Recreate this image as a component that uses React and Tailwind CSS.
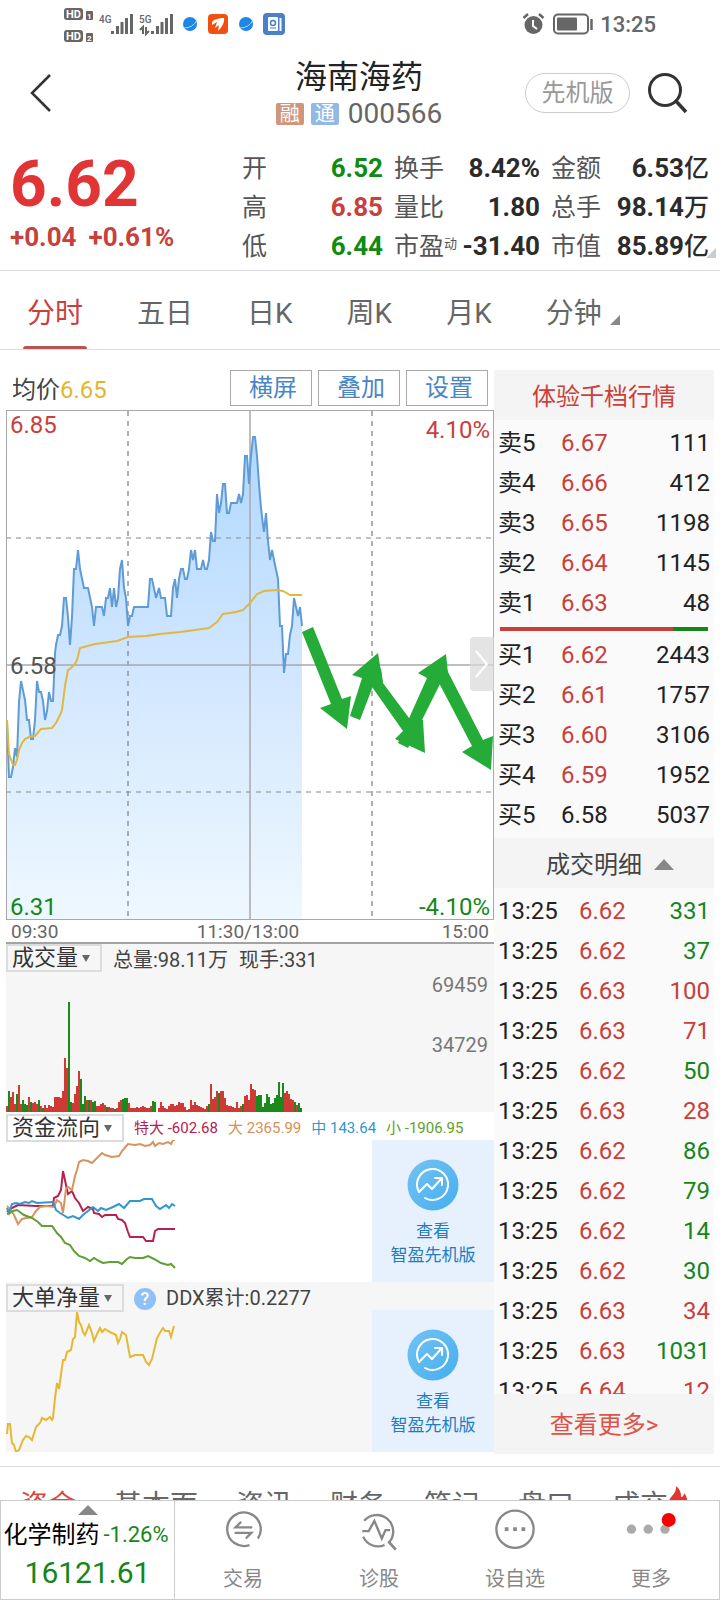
const RED = "text-[#c8403c]";
const GREEN = "text-[#16861a]";

const quotes = [
  [
    { label: "开", value: "6.52", color: "text-[#0f8a12]" },
    { label: "高", value: "6.85", color: RED },
    { label: "低", value: "6.44", color: "text-[#0f8a12]" },
  ],
  [
    { label: "换手", value: "8.42%" },
    { label: "量比", value: "1.80" },
    { label: "市盈", sup: "动", value: "-31.40" },
  ],
  [
    { label: "金额", value: "6.53", unit: "亿" },
    { label: "总手", value: "98.14", unit: "万" },
    { label: "市值", value: "85.89", unit: "亿" },
  ],
];

const periods = ["分时", "五日", "日K", "周K", "月K", "分钟"];

const sells = [
  ["卖5", "6.67", "111"],
  ["卖4", "6.66", "412"],
  ["卖3", "6.65", "1198"],
  ["卖2", "6.64", "1145"],
  ["卖1", "6.63", "48"],
];

const buys = [
  ["买1", "6.62", "2443"],
  ["买2", "6.61", "1757"],
  ["买3", "6.60", "3106"],
  ["买4", "6.59", "1952"],
  ["买5", "6.58", "5037"],
];

const trades = [
  ["6.62", "331", "sell"],
  ["6.62", "37", "sell"],
  ["6.63", "100", "buy"],
  ["6.63", "71", "buy"],
  ["6.62", "50", "sell"],
  ["6.63", "28", "buy"],
  ["6.62", "86", "sell"],
  ["6.62", "79", "sell"],
  ["6.62", "14", "sell"],
  ["6.62", "30", "sell"],
  ["6.63", "34", "buy"],
  ["6.63", "1031", "sell"],
  ["6.64", "12", "buy"],
];

const sections = ["资金", "基本面", "资讯", "财务", "笔记", "盘口", "成交"];

const priceLine =
  "7,722 9,777 11,777 13,767 15,748 17,757 19,702 21,681 25,700 27,720 29,720 31,739 33,739 35,720 37,681 39,692 41,692 43,701 45,720 47,711 49,692 51,701 53,701 55,653 56,645 58,635 60,635 62,626 64,598 66,598 68,617 70,645 72,617 74,569 76,569 78,550 80,569 84,588 88,588 92,607 94,626 96,607 102,607 104,616 106,598 108,598 110,588 112,607 114,588 116,607 118,598 120,569 122,560 124,588 126,598 128,626 130,616 132,616 134,607 148,607 150,579 152,579 156,598 159,588 161,598 165,598 167,616 171,616 173,588 175,579 177,598 179,579 181,569 183,569 185,579 187,579 189,569 191,550 193,560 195,550 197,569 201,569 203,560 205,569 207,569 209,560 211,532 213,541 215,541 217,494 219,513 221,503 223,484 225,484 227,513 229,513 231,503 237,503 239,494 241,503 243,494 245,456 247,456 249,484 251,456 253,437 255,437 257,456 259,484 261,508 263,525 264,532 266,513 268,541 270,560 272,550 274,560 278,579 280,626 282,626 284,673 286,654 288,654 290,635 292,626 294,598 296,607 298,616 300,607 302,626";

const avgLine =
  "7,720 9,754 13,765 15,765 17,760 19,750 22,743 25,739 29,737 35,736 41,729 52,728 56,723 60,715 62,710 65,686 68,670 70,669 75,664 77,660 80,648 95,644 117,641 128,637 146,636 160,634 180,632 195,630 209,628 217,622 223,614 236,612 243,610 250,603 257,594 264,591 276,590 283,591 290,595 302,595";

// positive = up minute, negative = down minute
const volumes = [
  6, -21, 15, 20, 8, -18, 27, 8, -12, -8, -7, 15, -10, 9, 10, 8, -12, 6, -4, 7,
  4, 7, 6, 5, 15, 15, 15, 14, 21, 54, 44, -110, -10, 9, 18, 26, 41, -33, -8, -16,
  12, -12, 12, -10, -11, 6, 6, 8, 9, 7, -5, 5, 4, 4, -3, 4, 10, 12, -13, -14,
  -14, 9, 4, 4, 4, 5, 4, 5, 6, 5, 4, 4, 6, -11, -10, 0, 4, 10, 6, 4,
  3, 6, 8, 8, 6, 7, 10, 9, 9, 5, 2, 3, 12, 7, 10, 7, 6, 5, 4, 3,
  6, -8, 28, 13, 15, 21, -19, 21, 21, 14, 7, 6, 6, 5, 4, 10, 4, 6, -8, 16,
  17, 12, 28, 23, 22, -16, -17, -17, -5, -9, -18, -15, -8, -9, -14, -17, -30, -15, -29, 19,
  21, 18, 13, 12, -10, 7, -9, -4,
];

const flowLines = [
  {
    color: "#b8204f",
    points:
      "7,1212 12,1208 16,1206 18,1205 36,1206 53,1206 54,1198 58,1196 61,1190 63,1171 66,1185 68,1194 72,1191 75,1198 79,1203 83,1211 88,1207 93,1209 94,1213 99,1214 102,1217 105,1215 116,1215 118,1219 122,1220 125,1223 128,1232 130,1237 143,1237 146,1241 153,1241 155,1231 158,1229 175,1229",
  },
  {
    color: "#d9935c",
    points:
      "7,1206 11,1210 14,1215 18,1224 22,1219 26,1218 32,1217 36,1211 40,1207 46,1206 54,1207 57,1200 61,1203 63,1213 66,1189 68,1187 72,1190 75,1176 77,1170 79,1162 83,1160 88,1161 92,1163 97,1158 102,1153 105,1155 112,1157 119,1156 122,1151 128,1144 135,1145 140,1144 145,1146 150,1145 153,1142 155,1146 159,1143 163,1144 168,1142 171,1144 173,1140 175,1140",
  },
  {
    color: "#2f97cf",
    points:
      "7,1208 9,1213 12,1204 16,1203 20,1204 25,1202 29,1203 32,1201 37,1203 53,1202 56,1210 60,1213 65,1216 68,1218 73,1216 79,1219 84,1214 88,1211 93,1207 98,1211 101,1208 106,1210 113,1207 119,1204 124,1208 130,1201 140,1201 144,1199 152,1199 156,1206 160,1209 166,1205 169,1208 172,1204 175,1206",
  },
  {
    color: "#5f9f33",
    points:
      "7,1214 10,1213 13,1211 17,1210 24,1215 32,1218 38,1222 42,1226 48,1226 52,1226 57,1233 61,1237 65,1243 70,1245 74,1251 79,1256 85,1258 90,1261 94,1258 99,1261 103,1263 110,1262 118,1262 122,1264 127,1259 130,1257 135,1258 143,1258 148,1256 154,1259 161,1263 168,1265 171,1264 175,1268",
  },
];

const ddxLine =
  "7,1434 8,1424 10,1424 12,1443 14,1445 16,1452 19,1450 23,1440 26,1436 29,1437 32,1440 36,1427 40,1423 42,1418 46,1420 50,1417 52,1420 53,1418 55,1398 57,1383 59,1389 63,1360 65,1360 67,1352 71,1350 73,1339 75,1337 77,1312 79,1322 81,1325 83,1332 85,1335 89,1325 92,1333 94,1341 98,1332 100,1328 102,1332 105,1329 110,1332 116,1335 118,1343 120,1339 122,1332 126,1335 130,1357 135,1355 143,1355 146,1362 149,1365 152,1359 157,1338 161,1331 163,1328 165,1331 169,1331 171,1337 174,1326";

function StatusBar() {
  return (
    <div className="flex h-12 items-center justify-between px-16">
      <svg width="224" height="40" viewBox="64 4 224 40" aria-hidden="true">
        <g fill="#666">
          <rect x="64" y="8" width="19" height="12" rx="3" />
          <rect x="64" y="30" width="19" height="12" rx="3" />
          <rect x="86" y="11" width="7" height="9" rx="1" />
          <rect x="86" y="33" width="7" height="9" rx="1" />
        </g>
        <g fill="#fff" fontFamily="Roboto, sans-serif" fontWeight="700">
          <text x="66" y="18" fontSize="11">HD</text>
          <text x="66" y="40" fontSize="11">HD</text>
          <text x="87" y="19" fontSize="8">1</text>
          <text x="87" y="41" fontSize="8">2</text>
        </g>
        <g fill="#666" fontFamily="Roboto, sans-serif" fontWeight="500" fontSize="10">
          <text x="99" y="23">4G</text>
          <text x="139" y="23">5G</text>
        </g>
        <g stroke="#666" strokeWidth="3">
          <path d="M112.500 31V34M117.500 26V34M122 22V34M126.500 18V34M131.500 14V34" />
          <path d="M152.500 31V34M157.500 26V34M162 22V34M166.500 18V34M171.500 14V34" />
        </g>
        <path d="M140 30L143 27V34M146 27V34L149 31" fill="none" stroke="#666" strokeWidth="2" />
        <circle cx="190" cy="24" r="7" fill="#1f86e6" />
        <path d="M184 28Q193 28 197 20" fill="none" stroke="#a9dcff" strokeWidth="1" />
        <rect x="208" y="14" width="20" height="20" rx="4" fill="#f2500f" />
        <path d="M212 22C214 19 220 18 224 18C225 23 221 28 218 31L219 25L215 28L217 22L212 25Z" fill="#fff" />
        <circle cx="246" cy="24" r="7" fill="#1f86e6" />
        <path d="M240 28Q249 28 253 20" fill="none" stroke="#a9dcff" strokeWidth="1" />
        <rect x="263" y="13" width="22" height="22" rx="4" fill="#4a80c8" />
        <rect x="268" y="17" width="10" height="14" rx="1" fill="#fff" />
        <path d="M280.500 18V31" stroke="#fff" strokeWidth="2" />
        <circle cx="273" cy="23" r="2.500" fill="none" stroke="#4a80c8" strokeWidth="1.500" />
        <path d="M270 28H276" stroke="#4a80c8" />
      </svg>
      <div className="flex items-center gap-1.5">
        <svg width="72" height="24" viewBox="522 12 72 24" aria-hidden="true">
          <circle cx="533.500" cy="25" r="9" fill="#666" />
          <path d="M533 20V26L537 29" fill="none" stroke="#fff" strokeWidth="2" />
          <path d="M523.500 18L528 14M543.500 18L539 14" stroke="#666" strokeWidth="2.500" />
          <rect x="554" y="14.500" width="34" height="19" rx="4" fill="none" stroke="#666" strokeWidth="2" />
          <rect x="557" y="17.500" width="20" height="13" rx="1" fill="#666" />
          <path d="M591.500 19V30" stroke="#666" strokeWidth="2.500" />
        </svg>
        <span className="pt-[2px] text-[22px] font-medium leading-none text-[#666]">13:25</span>
      </div>
    </div>
  );
}

function Header() {
  return (
    <header className="grid h-[90px] grid-cols-[1fr_auto_1fr] items-center pl-[30px] pr-8">
      <button aria-label="返回" className="w-6">
        <svg width="22" height="40" viewBox="0 0 22 40" fill="none" stroke="#333" strokeWidth="2.500">
          <path d="M20 2L2 20L20 38" />
        </svg>
      </button>
      <div className="flex flex-col items-center">
        <h1 className="text-[32px] leading-[42px] text-[#222]">海南海药</h1>
        <div className="flex items-center gap-[7px] text-[28px] leading-8 text-[#666]">
          <span className="flex h-[22px] w-7 items-center justify-center rounded-xs bg-[#cf967c] text-[20px] text-white">
            融
          </span>
          <span className="flex h-[22px] w-7 items-center justify-center rounded-xs bg-[#92b8e4] text-[20px] text-white">
            通
          </span>
          <span className="ml-[2px]">000566</span>
        </div>
      </div>
      <div className="flex items-center justify-end gap-[18px]">
        <button className="h-10 w-[105px] rounded-full border border-[#ccc] text-[24px] leading-none text-[#999]">
          先机版
        </button>
        <button aria-label="搜索">
          <svg width="40" height="42" viewBox="0 0 40 42" fill="none" stroke="#333">
            <circle cx="17" cy="18" r="15.500" strokeWidth="3" />
            <path d="M27 28L38 40" strokeWidth="3.500" />
          </svg>
        </button>
      </div>
    </header>
  );
}

function Quote() {
  return (
    <section className="relative flex h-[133px] border-b border-[#dcdcdc] pl-[10px] pr-[11px]">
      <div className="grow">
        <div className="pt-[15px] text-[64px] font-bold leading-[64px] text-[#e13434]">6.62</div>
        <div className={`mt-1 flex gap-3 text-[26px] font-bold leading-8 ${RED}`}>
          <span>+0.04</span>
          <span>+0.61%</span>
        </div>
      </div>
      <div className="grid grid-cols-[141px_146px_158px] gap-[11px] pt-[11px]">
        {quotes.map((col, i) => (
          <dl key={i}>
            {col.map((q) => (
              <div key={q.label} className="flex h-[39px] items-center justify-between whitespace-nowrap text-[26px]">
                <dt className="flex text-[25px] text-[#555]">
                  {q.label}
                  {q.sup && <span className="text-[13px] leading-8">{q.sup}</span>}
                </dt>
                <dd className={`font-bold ${q.color || "text-[#2b2b2b]"}`}>
                  {q.value}
                  {q.unit && <span className="text-[25px] font-medium">{q.unit}</span>}
                </dd>
              </div>
            ))}
          </dl>
        ))}
      </div>
      <svg className="absolute bottom-3 right-1" width="10" height="10" viewBox="0 0 10 10" fill="#ccc">
        <path d="M10 0V10H0Z" />
      </svg>
    </section>
  );
}

function PeriodTabs() {
  return (
    <nav className="flex h-[79px] gap-[54px] border-b border-[#dcdcdc] pl-[27px] text-[28px] text-[#666]">
      {periods.map((p, i) => (
        <button
          key={p}
          className={`relative flex items-center gap-2 whitespace-nowrap pt-2 ${i === 0 ? RED : ""}`}
        >
          {p}
          {i === 0 && <span className="absolute -inset-x-1 bottom-0 h-[3px] rounded-t-sm bg-[#b85450]" />}
          {p === "分钟" && (
            <svg className="mt-3" width="10" height="10" viewBox="0 0 10 10" fill="#888">
              <path d="M10 0V10H0Z" />
            </svg>
          )}
        </button>
      ))}
    </nav>
  );
}

function PriceChart() {
  return (
    <div>
      <div className="flex h-[40px] items-start justify-between pl-[6px] pr-[6px]">
        <p className="text-[24px] leading-[40px] text-[#444]">
          均价<span className="text-[#e3b62f]">6.65</span>
        </p>
        <div className="flex gap-[6px] text-[24px] text-[#4a86c5]">
          <button className="h-9 w-[82px] border border-[#aaa] pl-1 leading-none">横屏</button>
          <button className="h-9 w-[82px] border border-[#aaa] pl-1 leading-none">叠加</button>
          <button className="h-9 w-[82px] border border-[#aaa] pl-1 leading-none">设置</button>
        </div>
      </div>
      <div className="relative h-[510px] text-[24px] leading-none">
        <svg className="h-full w-full" viewBox="6 410 488 510" preserveAspectRatio="none">
          <defs>
            <linearGradient id="area" x1="0" y1="0" x2="0" y2="1">
              <stop offset="0" stopColor="#b0d8ff" />
              <stop offset="0.5" stopColor="#d2e7ff" />
              <stop offset="1" stopColor="#eef8ff" />
            </linearGradient>
          </defs>
          <polygon points={`7,919 ${priceLine} 302,919`} fill="url(#area)" />
          <g stroke="#8f8f8f" strokeOpacity="0.7" strokeWidth="2" strokeDasharray="5 5">
            <path d="M6 538H494M6 792H494" strokeOpacity="0.55" />
            <path d="M128 411V919M372 411V919" />
          </g>
          <path d="M6 665H494M250 410V920" stroke="#a8a8a8" strokeOpacity="0.75" strokeWidth="2" />
          <rect x="6.500" y="410.500" width="487" height="509" fill="none" stroke="#a8a8a8" />
          <polyline points={priceLine} fill="none" stroke="#5f9bd6" strokeWidth="2" />
          <polyline points={avgLine} fill="none" stroke="#e0b840" strokeWidth="2" />
          <g fill="#24ab38">
            <path d="M302 632L313 627L342 699L351 696L347 729L320 708L331 704Z" />
            <path d="M350 716L360 720L373 686L383 684L378 653L352 675L362 678Z" />
            <path d="M370 684L381 668L383 683L409 718L423 720L425 753L395 739L403 731Z" />
            <path d="M398 743L408 748L440 684L448 673L446 654L418 673L427 678Z" />
            <path d="M438 681L447 670L483 740L493 736L491 770L462 752L472 746Z" />
          </g>
        </svg>
        <span className={`absolute left-[4px] top-[3px] ${RED}`}>6.85</span>
        <span className={`absolute right-[4px] top-[8px] ${RED}`}>4.10%</span>
        <span className="absolute left-[4px] top-[244px] text-[#555]">6.58</span>
        <span className={`absolute bottom-[1px] left-[4px] ${GREEN}`}>6.31</span>
        <span className={`absolute bottom-[1px] right-[4px] ${GREEN}`}>-4.10%</span>
        <button
          aria-label="展开"
          className="absolute right-0 top-[227px] flex h-[54px] w-6 items-center justify-center rounded-l bg-[#d9d9d9]/70"
        >
          <svg width="14" height="28" viewBox="0 0 14 28" fill="none" stroke="#fff" strokeWidth="2">
            <path d="M1 1L12 14L1 27" />
          </svg>
        </button>
      </div>
      <div className="grid h-6 grid-cols-3 border-b-2 border-[#a3a3a3] pl-[5px] pr-[5px] text-[19px] leading-6 text-[#666]">
        <span>09:30</span>
        <span className="pr-1 text-center">11:30/13:00</span>
        <span className="text-right">15:00</span>
      </div>
    </div>
  );
}

function IndicatorSelect({ label, name }) {
  return (
    <div className="relative h-7 self-start border-2 border-[#dcdcdc]">
      <select
        aria-label={label}
        name={name}
        className="block h-6 appearance-none bg-transparent pl-1 pr-[21px] text-[22px] leading-6 text-[#333] outline-none"
      >
        <option>{label}</option>
      </select>
      <svg
        className="pointer-events-none absolute right-[10px] top-[9px]"
        width="8"
        height="7"
        viewBox="0 0 8 7"
        fill="#666"
      >
        <path d="M0 0H8L4 7Z" />
      </svg>
    </div>
  );
}

function Promo() {
  return (
    <a
      href="#pro"
      className="flex h-[142px] w-1/4 flex-col items-center bg-[#e6f1fd] pt-[19px] text-[17px] leading-6 text-[#1f7cc0]"
    >
      <svg className="mb-2" width="52" height="52" viewBox="0 0 52 52" fill="none">
        <defs>
          <linearGradient id="promo" x1="0" y1="0" x2="1" y2="1">
            <stop offset="0" stopColor="#73c3f3" />
            <stop offset="1" stopColor="#45aef0" />
          </linearGradient>
        </defs>
        <circle cx="26" cy="26" r="25.500" fill="url(#promo)" />
        <g stroke="#fff" strokeWidth="2" strokeLinecap="round" strokeLinejoin="round">
          <path d="M12 33A15.500 15.500 0 1 1 18 39" />
          <path d="M12 33L20 25L25 30L34 20" />
          <path d="M28 19H35V26" />
        </g>
      </svg>
      <span>查看</span>
      <span>智盈先机版</span>
    </a>
  );
}

function VolumePanel() {
  return (
    <section className="bg-[#f6f6f6]">
      <div className="flex h-7 items-end gap-[11px] text-[20px] leading-6 text-[#444]">
        <IndicatorSelect label="成交量" name="volume" />
        <span>总量:98.11万</span>
        <span>现手:331</span>
      </div>
      <div className="relative h-[140px] text-[20px] leading-none text-[#777]">
        <svg className="h-full w-full" viewBox="6 972 488 140" preserveAspectRatio="none">
          {volumes.map((v, i) => (
            <rect
              key={i}
              x={6 + i * 2}
              y={1112 - Math.abs(v)}
              width="2"
              height={Math.abs(v)}
              fill={v > 0 ? "#d03a35" : "#1a8a1c"}
            />
          ))}
        </svg>
        <span className="absolute right-[6px] top-[3px]">69459</span>
        <span className="absolute right-[6px] top-[63px]">34729</span>
      </div>
    </section>
  );
}

function FlowPanel() {
  return (
    <section>
      <div className="flex h-7 items-end gap-[10px] whitespace-nowrap pt-[2px] text-[15px] leading-6">
        <IndicatorSelect label="资金流向" name="flow" />
        <span className="text-[#b8204f]">特大 -602.68</span>
        <span className="text-[#d98f55]">大 2365.99</span>
        <span className="text-[#2f97cf]">中 143.64</span>
        <span className="text-[#5f9f2b]">小 -1906.95</span>
      </div>
      <div className="flex">
        <svg className="h-[142px] w-3/4" viewBox="6 1140 366 142" preserveAspectRatio="none">
          {flowLines.map((l) => (
            <polyline key={l.color} points={l.points} fill="none" stroke={l.color} strokeWidth="2" />
          ))}
        </svg>
        <Promo />
      </div>
    </section>
  );
}

function DdxPanel() {
  return (
    <section className="bg-[#f6f6f6]">
      <div className="flex h-7 items-end gap-[10px] pt-[2px] text-[20px] leading-6 text-[#444]">
        <IndicatorSelect label="大单净量" name="ddx" />
        <button
          aria-label="说明"
          className="flex size-[22px] items-center justify-center rounded-full bg-[#8fc0f7] text-[18px] font-medium leading-none text-white"
        >
          ?
        </button>
        <span>DDX累计:0.2277</span>
      </div>
      <div className="flex">
        <svg className="h-[142px] w-3/4" viewBox="6 1310 366 142" preserveAspectRatio="none">
          <polyline points={ddxLine} fill="none" stroke="#e6b832" strokeWidth="2" />
        </svg>
        <Promo />
      </div>
    </section>
  );
}

function BookTable({ rows }) {
  return (
    <table className="w-full table-fixed text-[#222]">
      <tbody>
        {rows.map(([name, price, qty]) => (
          <tr key={name} className="h-10">
            <th className="w-[67px] p-0 pl-1 text-left font-normal">{name}</th>
            <td className={`p-0 ${price === "6.58" ? "" : RED}`}>{price}</td>
            <td className="p-0 pr-1 text-right">{qty}</td>
          </tr>
        ))}
      </tbody>
    </table>
  );
}

function OrderBook() {
  return (
    <aside className="flex flex-col bg-[#fafafa] text-[24px] leading-8">
      <a href="#depth" className="flex h-[50px] items-center justify-center bg-[#f4f4f4] pt-1 text-[#cc3f3b]">
        体验千档行情
      </a>
      <div className="pt-[3px]">
        <BookTable rows={sells} />
        <div className="mx-[6px] my-1 flex h-1">
          <div className="w-[83%] bg-[#c8403c]" />
          <div className="grow bg-[#16861a]" />
        </div>
        <BookTable rows={buys} />
      </div>
      <button className="mt-[3px] flex h-[50px] items-center justify-center gap-3 bg-[#f4f4f4] pl-3 pt-[3px] text-[#444]">
        成交明细
        <svg width="20" height="11" viewBox="0 0 20 11" fill="#888">
          <path d="M0 11L10 0L20 11Z" />
        </svg>
      </button>
      <div className="h-[506px] overflow-hidden pt-[3px]">
        <table className="w-full table-fixed text-[#222]">
          <tbody>
            {trades.map(([price, qty, side], i) => (
              <tr key={i} className="h-10">
                <td className="w-[85px] p-0 pl-1">13:25</td>
                <td className={`p-0 ${RED}`}>{price}</td>
                <td className={`p-0 pr-1 text-right ${side === "buy" ? RED : GREEN}`}>{qty}</td>
              </tr>
            ))}
          </tbody>
        </table>
      </div>
      <a href="#trades" className="flex h-[60px] items-center justify-center bg-[#f4f4f4] pt-[2px] text-[#dd5349]">
        查看更多&gt;
      </a>
    </aside>
  );
}

function SectionTabs() {
  return (
    <nav className="mt-3 flex h-[34px] items-start gap-[38px] overflow-hidden whitespace-nowrap border-t border-[#dcdcdc] pl-5 pt-[19px] text-[28px] leading-10 text-[#666]">
      {sections.map((s, i) => (
        <a key={s} href={`#section-${i}`} className={`flex shrink-0 ${i === 0 ? "text-[#dd453d]" : ""}`}>
          {s}
          {s === "成交" && (
            <svg width="20" height="24" viewBox="0 0 20 24" fill="#e2352f">
              <path d="M8 0C13 4 13 8 13 11C15 11 16 9 16 7C19 11 20 14 19 18C18 22 14 24 10 24C4 24 1 20 1 16C1 11 9 8 8 0Z" />
            </svg>
          )}
        </a>
      ))}
    </nav>
  );
}

function NavItem({ label, children }) {
  return (
    <button className="flex flex-1 flex-col items-center pt-1 text-[20px] text-[#888]">
      <svg width="60" height="58" viewBox="0 0 60 58" fill="none" stroke="#888" strokeWidth="2.500">
        {children}
      </svg>
      <span className="leading-10">{label}</span>
    </button>
  );
}

function BottomBar() {
  return (
    <footer className="flex h-[100px] border border-[#ccc] bg-white">
      <button className="flex w-[174px] flex-col items-center border-r border-[#ccc] pt-1">
        <svg width="20" height="10" viewBox="0 0 20 10" fill="#888">
          <path d="M0 10L10 0L20 10Z" />
        </svg>
        <span className="mt-1 flex items-center gap-1 whitespace-nowrap pr-[3px] text-[24px] leading-8 text-black">
          化学制药 <span className={`text-[22px] ${GREEN}`}>-1.26%</span>
        </span>
        <span className={`mt-1 text-[30px] leading-9 ${GREEN}`}>16121.61</span>
      </button>
      <NavItem label="交易">
        <path d="M37 43A18 18 0 1 1 46 36" />
        <path d="M40 24H22L28 18M21 30H39L33 36" />
      </NavItem>
      <NavItem label="诊股">
        <path d="M14 17A17.500 17.500 0 1 1 41 40" />
        <path d="M40 39L48 48" strokeWidth="3" />
        <path d="M12 28H19L25 17L33 36L37 27H42" />
        <path d="M13 34A17.500 17.500 0 0 0 36 43" />
      </NavItem>
      <NavItem label="设自选">
        <circle cx="30" cy="26" r="20" />
        <path d="M19 26H23M28 26H32M37 26H41" strokeWidth="4" />
      </NavItem>
      <NavItem label="更多">
        <g stroke="none" fill="#aaa">
          <circle cx="9" cy="26" r="5" />
          <circle cx="27" cy="26" r="5" />
          <circle cx="45" cy="26" r="5" />
        </g>
        <circle cx="49" cy="16" r="7.500" fill="#f80000" stroke="none" />
      </NavItem>
    </footer>
  );
}

export default function App() {
  return (
    <div className="bg-white font-['Roboto','Noto_Sans_CJK_SC',sans-serif]">
      <StatusBar />
      <Header />
      <Quote />
      <PeriodTabs />
      <main className="grid grid-cols-[minmax(0,1fr)_220px] px-[6px] pt-5">
        <div>
          <PriceChart />
          <VolumePanel />
          <FlowPanel />
          <DdxPanel />
        </div>
        <OrderBook />
      </main>
      <SectionTabs />
      <BottomBar />
    </div>
  );
}
